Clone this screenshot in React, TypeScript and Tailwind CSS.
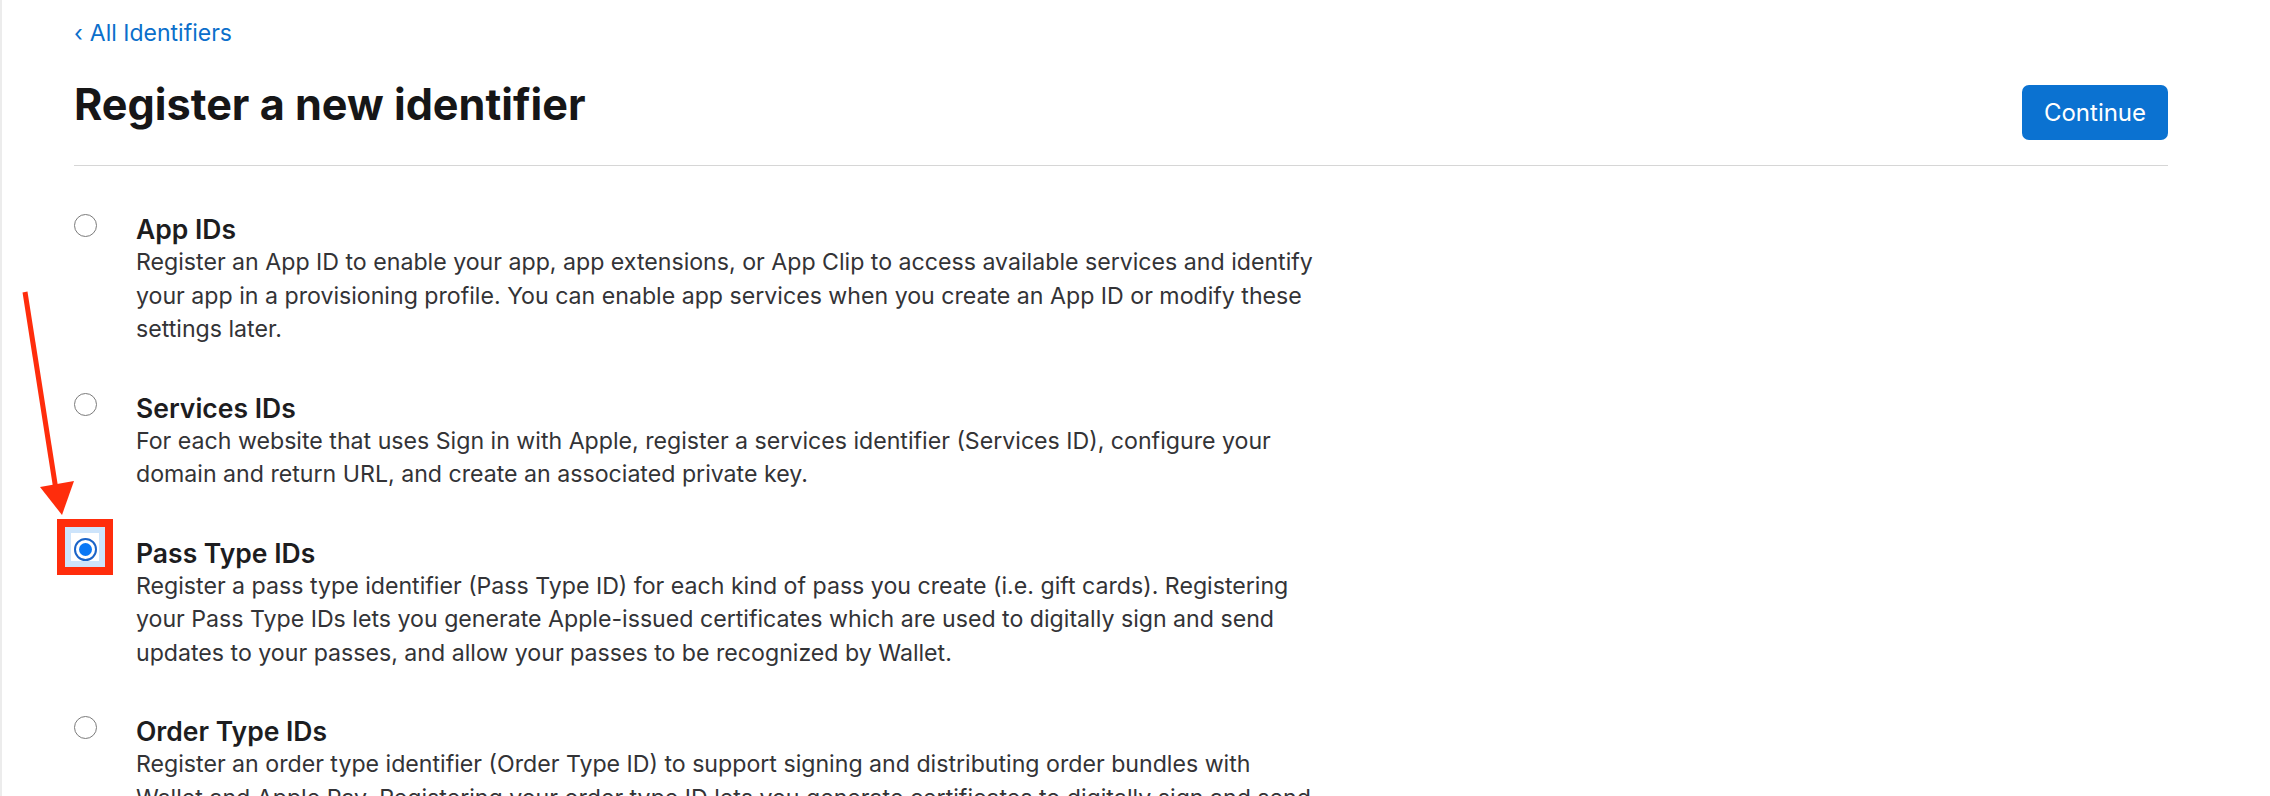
import React from "react";

const font = { fontFamily: 'Inter, "Noto Sans", "Liberation Sans", sans-serif' };

type Item = { title: string; lines: string[]; selected?: boolean };

const items: Item[] = [
  {
    title: "App IDs",
    lines: [
      "Register an App ID to enable your app, app extensions, or App Clip to access available services and identify",
      "your app in a provisioning profile. You can enable app services when you create an App ID or modify these",
      "settings later.",
    ],
  },
  {
    title: "Services IDs",
    lines: [
      "For each website that uses Sign in with Apple, register a services identifier (Services ID), configure your",
      "domain and return URL, and create an associated private key.",
    ],
  },
  {
    title: "Pass Type IDs",
    selected: true,
    lines: [
      "Register a pass type identifier (Pass Type ID) for each kind of pass you create (i.e. gift cards). Registering",
      "your Pass Type IDs lets you generate Apple-issued certificates which are used to digitally sign and send",
      "updates to your passes, and allow your passes to be recognized by Wallet.",
    ],
  },
  {
    title: "Order Type IDs",
    lines: [
      "Register an order type identifier (Order Type ID) to support signing and distributing order bundles with",
      "Wallet and Apple Pay. Registering your order type ID lets you generate certificates to digitally sign and send",
      "updates to orders, and allow orders to be recognized by Wallet.",
    ],
  },
];

function Radio({ selected }: { selected?: boolean }) {
  if (selected) {
    return (
      <div className="relative w-[23px] h-[23px]">
        <div className="absolute left-[-17px] top-[-19px] w-[56px] h-[56px] border-[8px] border-[#ff2d0c] bg-[#cde4fb] flex items-center justify-center">
          <div className="w-[28px] h-[28px] bg-white" />
        </div>
        <div className="relative w-[23px] h-[23px] rounded-full border-2 border-[#1a64c8] bg-white flex items-center justify-center">
          <div className="w-[13px] h-[13px] rounded-full bg-[#0a78f5]" />
        </div>
      </div>
    );
  }
  return <div className="w-[23px] h-[23px] rounded-full border-[1.5px] border-[#7b7b7b] bg-white" />;
}

export default function App() {
  return (
    <div
      className="relative min-h-screen bg-white border-l-2 border-[#ececec] pl-[72px] pr-[102px] overflow-hidden"
      style={font}
    >
      <div className="pt-[19px] h-[46px] leading-[28px] text-[23px] text-[#0b6fcb]">
        <span className="mr-[7px]">‹</span>All Identifiers
      </div>
      <div className="flex justify-between items-start mt-[33px]">
        <h1 className="text-[43.2px] leading-[50px] font-bold text-[#161617]">
          Register a new identifier
        </h1>
        <button className="mt-[6px] w-[146px] h-[55px] rounded-[7px] bg-[#0b72d1] text-white text-[24px]">
          Continue
        </button>
      </div>
      <div className="mt-[25px] border-t border-[#d6d6d6]" />
      <div className="pt-[46px] flex flex-col gap-[44px]">
        {items.map((it) => (
          <div key={it.title} className="flex">
            <div className="w-[62px] shrink-0 pt-[2px]">
              <Radio selected={it.selected} />
            </div>
            <div>
              <div className="text-[26.5px] leading-[34px] font-semibold text-[#1d1d1f]">{it.title}</div>
              <div className="text-[23.15px] leading-[33.5px] text-[#333336]">
                {it.lines.map((l) => (
                  <div key={l} className="whitespace-nowrap">{l}</div>
                ))}
              </div>
            </div>
          </div>
        ))}
      </div>
      <svg className="absolute left-0 top-0" width="100" height="560" viewBox="0 0 100 560">
        <line x1="23" y1="292" x2="54" y2="490" stroke="#ff2d0c" strokeWidth="5" />
        <polygon points="38,487 72,481 60,515" fill="#ff2d0c" />
      </svg>
    </div>
  );
}
